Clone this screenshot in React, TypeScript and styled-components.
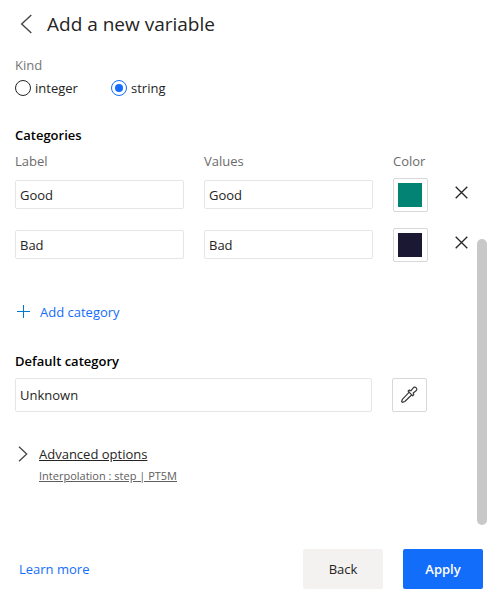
import React, { useState } from "react";
import styled, { createGlobalStyle } from "styled-components";

const GlobalStyle = createGlobalStyle`
  *, *::before, *::after { box-sizing: border-box; }
  body { margin: 0; background: #fff; }
  body, button, input {
    font-family: "Segoe UI", "Open Sans", "Noto Sans", sans-serif;
    font-size: 13px;
    line-height: 20px;
    color: #252423;
  }
  button { padding: 0; border: 0; background: none; cursor: pointer; }
`;

const Panel = styled.div`
  display: flex;
  flex-direction: column;
  min-height: 100vh;
`;

const Header = styled.header`
  display: flex;
  align-items: center;
  gap: 15px;
  height: 48px;
  padding-left: 20px;
`;

const IconButton = styled.button`
  display: flex;
  align-items: center;
  justify-content: center;
`;

const Title = styled.h1`
  margin: 0;
  font-size: 19px;
  line-height: 28px;
  font-weight: 400;
`;

const Body = styled.main`
  display: flex;
  flex: 1;
  gap: 2px;
  padding: 0 17px 0 15px;
`;

const Form = styled.form`
  flex: 1;
  min-width: 0;
  padding-top: 7px;
`;

const ScrollRail = styled.div`
  display: flex;
  flex-direction: column;
  justify-content: flex-end;
  width: 10px;
`;

const ScrollThumb = styled.div`
  flex: 0 0 60%;
  border-radius: 5px;
  background: #c8c8c8;
`;

const KindGroup = styled.fieldset`
  margin: 0 0 27px;
  padding: 0;
  border: 0;
`;

const Legend = styled.legend`
  margin-bottom: 3px;
  padding: 0;
  color: #757575;
`;

const RadioRow = styled.div`
  display: flex;
`;

const RadioLabel = styled.label`
  display: flex;
  align-items: center;
  gap: 4px;
  width: 96px;
`;

const Radio = styled.input`
  appearance: none;
  display: grid;
  place-items: center;
  width: 16px;
  height: 16px;
  margin: 0;
  border: 1px solid #252423;
  border-radius: 50%;

  &:checked { border-color: #136dfb; }
  &:checked::before {
    content: "";
    width: 8px;
    height: 8px;
    border-radius: 50%;
    background: #136dfb;
  }
`;

const SectionTitle = styled.h2`
  margin: 0;
  font-size: 13px;
  line-height: 20px;
  font-weight: 600;
  color: #000;
`;

const CategoryGrid = styled.div`
  display: grid;
  grid-template-columns: 1fr 1fr 35px 27px;
  column-gap: 20px;
  align-items: start;
`;

const ColumnHeads = styled(CategoryGrid)`
  margin: 6px 0 7px;
  color: #6b6b6b;
`;

const CategoryRow = styled(CategoryGrid)`
  & + & { margin-top: 16px; }
`;

const TextInput = styled.input<{ $tall?: boolean }>`
  width: 100%;
  min-width: 0;
  height: ${(p) => (p.$tall ? 34 : 29)}px;
  margin: ${(p) => (p.$tall ? 0 : 2)}px 0 0;
  padding: 0 4px;
  border: 1px solid #e6e6e6;
  border-radius: 2px;
  background: #fff;
`;

const ColorButton = styled.button`
  display: grid;
  place-items: start;
  width: 35px;
  height: 34px;
  padding: 4px;
  border: 1px solid #d8d8d8;
  border-radius: 2px;
`;

const Swatch = styled.span<{ $color: string }>`
  width: 24px;
  height: 24px;
  background: ${(p) => p.$color};
`;

const RemoveButton = styled(IconButton)`
  height: 29px;
`;

const AddButton = styled.button`
  display: flex;
  align-items: center;
  gap: 9px;
  margin: 40px 0 29px;
  padding-left: 2px;
  color: #136dfb;
`;

const DefaultRow = styled.div`
  display: grid;
  grid-template-columns: 1fr 35px;
  gap: 20px;
  margin: 7px 48px 32px 0;
`;

const Advanced = styled.button`
  display: grid;
  grid-template-columns: 10px auto;
  column-gap: 11px;
  row-gap: 2px;
  align-items: center;
  justify-items: start;
  padding-left: 3px;
`;

const AdvancedTitle = styled.span`
  text-decoration: underline;
`;

const AdvancedSummary = styled.span`
  grid-column: 2;
  font-size: 11px;
  color: #605e5c;
  text-decoration: underline;
`;

const Footer = styled.footer`
  display: flex;
  align-items: center;
  gap: 20px;
  padding: 24px 21px 17px 19px;
`;

const LearnMore = styled.a`
  margin-right: auto;
  color: #136dfb;
  text-decoration: none;
`;

const ActionButton = styled.button<{ $primary?: boolean }>`
  width: 80px;
  height: 40px;
  border-radius: 2px;
  font-weight: ${(p) => (p.$primary ? 600 : 400)};
  color: ${(p) => (p.$primary ? "#fff" : "#252423")};
  background: ${(p) => (p.$primary ? "#136dfb" : "#f3f2f1")};
`;

const BackIcon = () => (
  <svg width="12" height="20" viewBox="0 0 12 20" fill="none" stroke="#484644" strokeWidth="1.4" aria-hidden="true">
    <path d="M11.3 1 1.7 10l9.6 9" />
  </svg>
);

const ExpandIcon = () => (
  <svg width="10" height="16" viewBox="0 0 10 16" fill="none" stroke="#484644" strokeWidth="1.3" aria-hidden="true">
    <path d="m1 .7 7.7 7.3L1 15.3" />
  </svg>
);

const CloseIcon = () => (
  <svg width="13" height="13" viewBox="0 0 13 13" fill="none" stroke="#252423" strokeWidth="1.3" aria-hidden="true">
    <path d="m.7.7 11.6 11.6M12.3.7.7 12.3" />
  </svg>
);

const PlusIcon = () => (
  <svg width="14" height="14" viewBox="0 0 14 14" fill="#0078d4" aria-hidden="true">
    <path d="M0 5h6V-1h1v6h6v1H7v6H6V6H0z" transform="translate(0 1)" />
  </svg>
);

const EyedropperIcon = () => (
  <svg width="24" height="24" viewBox="-3 -3 24 24" fill="none" stroke="#3b3a39" strokeWidth="1.2" strokeLinejoin="round" strokeLinecap="round" aria-hidden="true">
    <path d="m9.2 6.2-6.8 7.1-.8 2.2.9.9 2.3-.9 7-6.7" />
    <path d="m8.1 5.1 1.3-1 1.5.7 2.1-2.7c1-1.2 2.4-1.1 3.2-.3.9.9.8 2.3-.4 3.2l-2.6 2 .6 1.6-1.1 1.2z" />
  </svg>
);

const categories = [
  { name: "Good", color: "#038374" },
  { name: "Bad", color: "#1b1834" },
];

export default function App() {
  const [kind, setKind] = useState("string");

  return (
    <Panel>
      <GlobalStyle />
      <Header>
        <IconButton type="button" aria-label="Go back"><BackIcon /></IconButton>
        <Title>Add a new variable</Title>
      </Header>
      <Body>
        <Form id="variable-form" onSubmit={(e) => e.preventDefault()}>
          <KindGroup>
            <Legend>Kind</Legend>
            <RadioRow>
              {["integer", "string"].map((value) => (
                <RadioLabel key={value}>
                  <Radio type="radio" name="kind" value={value} checked={kind === value} onChange={() => setKind(value)} />
                  {value}
                </RadioLabel>
              ))}
            </RadioRow>
          </KindGroup>

          <SectionTitle>Categories</SectionTitle>
          <ColumnHeads>
            <span id="head-label">Label</span>
            <span id="head-values">Values</span>
            <span>Color</span>
          </ColumnHeads>
          {categories.map(({ name, color }) => (
            <CategoryRow key={name}>
              <TextInput aria-labelledby="head-label" defaultValue={name} />
              <TextInput aria-labelledby="head-values" defaultValue={name} />
              <ColorButton type="button" aria-label={`Color of ${name}`}><Swatch $color={color} /></ColorButton>
              <RemoveButton type="button" aria-label={`Remove ${name}`}><CloseIcon /></RemoveButton>
            </CategoryRow>
          ))}
          <AddButton type="button"><PlusIcon />Add category</AddButton>

          <SectionTitle as="label" htmlFor="default-category">Default category</SectionTitle>
          <DefaultRow>
            <TextInput $tall id="default-category" defaultValue="Unknown" />
            <ColorButton type="button" aria-label="Pick default color"><EyedropperIcon /></ColorButton>
          </DefaultRow>

          <Advanced type="button" aria-expanded={false}>
            <ExpandIcon />
            <AdvancedTitle>Advanced options</AdvancedTitle>
            <AdvancedSummary>Interpolation : step | PT5M</AdvancedSummary>
          </Advanced>
        </Form>
        <ScrollRail aria-hidden="true"><ScrollThumb /></ScrollRail>
      </Body>
      <Footer>
        <LearnMore href="#learn-more">Learn more</LearnMore>
        <ActionButton type="button">Back</ActionButton>
        <ActionButton $primary type="submit" form="variable-form">Apply</ActionButton>
      </Footer>
    </Panel>
  );
}
